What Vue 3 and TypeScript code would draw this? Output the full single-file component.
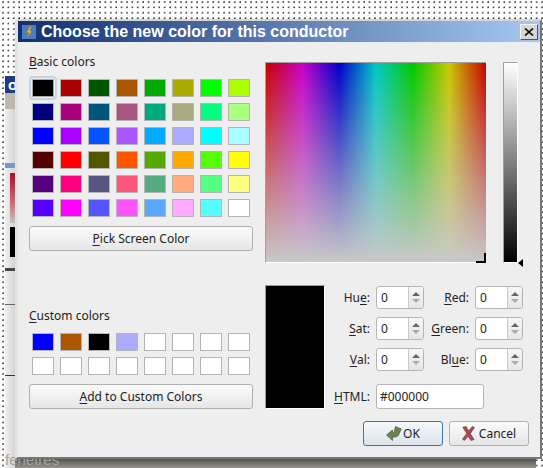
<script setup lang="ts">
const basic: string[] = [
  '#000000','#aa0000','#005500','#aa5500','#00aa00','#aaaa00','#00ff00','#aaff00',
  '#00007f','#aa007f','#00557f','#aa557f','#00aa7f','#aaaa7f','#00ff7f','#aaff7f',
  '#0000ff','#aa00ff','#0055ff','#aa55ff','#00aaff','#aaaaff','#00ffff','#aaffff',
  '#550000','#ff0000','#555500','#ff5500','#55aa00','#ffaa00','#55ff00','#ffff00',
  '#55007f','#ff007f','#55557f','#ff557f','#55aa7f','#ffaa7f','#55ff7f','#ffff7f',
  '#5500ff','#ff00ff','#5555ff','#ff55ff','#55aaff','#ffaaff','#55ffff','#ffffff',
]
const custom: string[] = [
  '#0000ff','#aa5500','#000000','#aaaaff','#ffffff','#ffffff','#ffffff','#ffffff',
  '#ffffff','#ffffff','#ffffff','#ffffff','#ffffff','#ffffff','#ffffff','#ffffff',
]
const fields = [
  { pre: 'Hu', key: 'e', post: ':' },
  { pre: '', key: 'R', post: 'ed:' },
  { pre: '', key: 'S', post: 'at:' },
  { pre: '', key: 'G', post: 'reen:' },
  { pre: '', key: 'V', post: 'al:' },
  { pre: 'Bl', key: 'u', post: 'e:' },
]
</script>

<template>
  <div class="desk">
    <div class="behind">
      <div class="b-title">o</div>
      <div class="b-tan"></div>
      <div class="b-blue"></div>
      <div class="b-red"></div>
      <div class="b-black"></div>
      <div class="b-line b-l1"></div>
      <div class="b-line b-l2"></div>
      <div class="b-line b-l3"></div>
    </div>
    <div class="under"></div>
    <div class="under-text">fenêtres</div>

    <div class="dialog">
      <header class="title">
        <svg class="app-icon" viewBox="0 0 14 14" width="14" height="14">
          <rect x="0" y="0" width="14" height="14" fill="#4a7cc0" />
          <path d="M8 1.5 L4.5 7.5 H7 L5.5 12.5 L10 6 H7.5 L9.5 1.5 Z" fill="#f0c020" stroke="#a87808" stroke-width=".5" />
        </svg>
        <span class="title-text">Choose the new color for this conductor</span>
        <button class="close" type="button">
          <svg viewBox="0 0 10 8" width="10" height="8">
            <path d="M1 0.5 L9 7.5 M9 0.5 L1 7.5" stroke="#000" stroke-width="1.6" fill="none" />
          </svg>
        </button>
      </header>

      <main class="body">
        <div class="top">
          <section class="left">
            <div class="label"><u>B</u>asic colors</div>
            <div class="swatches">
              <div
                v-for="(c, i) in basic"
                :key="i"
                class="swatch"
                :class="{ selected: i === 0 }"
                :style="{ background: c }"
              ></div>
            </div>
            <button class="btn wide" type="button"><u>P</u>ick Screen Color</button>
            <div class="label custom-label"><u>C</u>ustom colors</div>
            <div class="swatches">
              <div v-for="(c, i) in custom" :key="i" class="swatch" :style="{ background: c }"></div>
            </div>
            <button class="btn wide" type="button"><u>A</u>dd to Custom Colors</button>
          </section>

          <section class="right">
            <div class="pick-row">
              <div class="spectrum"><span class="cross"></span></div>
              <div class="lum"><span class="lum-arrow"></span></div>
            </div>
            <div class="ctl-row">
              <div class="preview"></div>
              <div class="form">
                <template v-for="f in fields" :key="f.pre + f.key">
                  <label class="f-label">{{ f.pre }}<u>{{ f.key }}</u>{{ f.post }}</label>
                  <div class="spin">
                    <span class="spin-val">0</span>
                    <span class="spin-btns">
                      <i class="up"></i>
                      <i class="down"></i>
                    </span>
                  </div>
                </template>
                <label class="f-label html-label"><u>H</u>TML:</label>
                <div class="html-input">#000000</div>
              </div>
            </div>
          </section>
        </div>

        <footer class="actions">
          <button class="btn action default" type="button">
            <svg viewBox="0 0 16 15" width="16" height="15">
              <path d="M9.5 0.5 L15.3 3 L12.6 9 Q11.6 11 9 11 H6.5 V14.5 L0.5 9 L6.5 4 V6.6 H8 Z" fill="#6d8057" stroke="#4d5c3c" stroke-width=".7" />
            </svg>
            <span>OK</span>
          </button>
          <button class="btn action cancel" type="button">
            <svg viewBox="0 0 13 15" width="13" height="15">
              <path d="M0.8 1.2 L4.2 0.6 L6.6 5 L10.4 0.5 L12.4 1.6 L8.3 7.7 L12.2 13.6 L9 14.6 L6.1 10.2 L2.5 14.4 L0.5 13.2 L4.7 7.5 Z" fill="#a84a52" stroke="#743038" stroke-width=".6" />
            </svg>
            <span>Cancel</span>
          </button>
        </footer>
      </main>
    </div>
  </div>
</template>

<style scoped>
.desk {
  position: relative;
  width: 543px;
  height: 468px;
  overflow: hidden;
  background-color: #fff;
  background-image: radial-gradient(circle at 1px 1px, #333 0.6px, transparent 0.9px);
  background-size: 5.4px 5.4px;
  background-position: 2px 1px;
  font-family: "Noto Sans", "Open Sans", sans-serif;
  font-size: 12px;
  color: #222;
}
.behind {
  position: absolute;
  left: 5px;
  top: 76px;
  width: 14px;
  height: 392px;
  background: linear-gradient(to right, #f0f0f0, #c8c8c8);
}
.behind > div { position: absolute; }
.b-title { left: 0; top: 0; width: 14px; height: 17px; background: #1d3d80; color: #fff; font: bold 15px/17px "Liberation Sans", sans-serif; padding-left: 3px; box-sizing: border-box; }
.b-tan { left: 0; top: 17px; width: 14px; height: 16px; background: #bcb8ad; }
.b-blue { left: 0; top: 87px; width: 14px; height: 5px; background: #7d97c4; }
.b-red { left: 5px; top: 97px; width: 9px; height: 50px; background: linear-gradient(to bottom, #a81028, #c87880 65%, #c4c4c4); }
.b-black { left: 5px; top: 151px; width: 9px; height: 30px; background: #000; }
.b-line { left: 0; width: 14px; background: #666; }
.b-l1 { top: 192px; height: 3px; background: #444; }
.b-l2 { top: 228px; height: 1px; }
.b-l3 { top: 299px; height: 1px; background: #333; }
.under {
  position: absolute;
  left: 15px;
  bottom: 0;
  width: 521px;
  height: 10px;
  background: linear-gradient(to bottom, #4e4e48, #96948c);
}
.under-text {
  position: absolute;
  left: 5px;
  top: 451px;
  height: 17px;
  color: #a4a4a0;
  font: 15px/17px "Liberation Sans", sans-serif;
  white-space: nowrap;
}
.dialog {
  position: absolute;
  left: 15px;
  top: 19px;
  width: 527px;
  height: 440px;
  box-sizing: border-box;
  display: flex;
  flex-direction: column;
  background: #eeeeee;
  border-style: solid;
  border-width: 2px 2px 2px 3px;
  border-color: #d8d6d0 #777 #777 #e4e2de;
}
.title {
  height: 21px;
  display: flex;
  align-items: center;
  padding: 0 2px 0 4px;
  background: linear-gradient(to right, #12306e, #a6c8f0);
  color: #fff;
}
.app-icon { flex: none; }
.title-text {
  margin-left: 5px;
  font: bold 16px "Liberation Sans", sans-serif;
  white-space: nowrap;
}
.close {
  margin-left: auto;
  width: 18px;
  height: 16px;
  padding: 0;
  display: flex;
  align-items: center;
  justify-content: center;
  background: #d8d6d0;
  border: 1px solid;
  border-color: #f4f4f0 #555 #555 #f4f4f0;
}
.body {
  flex: 1;
  display: flex;
  flex-direction: column;
  padding: 13px 0 0 11px;
  min-height: 0;
}
.top { display: flex; }
.left { width: 224px; display: flex; flex-direction: column; }
.label { height: 14px; line-height: 14px; color: #222; }
.custom-label { margin-top: 58px; }
u { text-underline-offset: 2px; }
.swatches {
  display: grid;
  grid-template-columns: repeat(8, 22px);
  grid-auto-rows: 18px;
  gap: 6px;
  margin: 10px 0 9px 3px;
}
.swatch {
  box-sizing: border-box;
  border: 1px solid #b4b4b4;
}
.selected {
  outline: 2px solid #c4d4e2;
  outline-offset: 1px;
  border-color: #a8a8a8;
  border-radius: 1px;
}
.btn {
  box-sizing: border-box;
  height: 25px;
  padding: 0;
  font: inherit;
  color: #222;
  border: 1px solid #b0b0b0;
  border-radius: 3px;
  background: linear-gradient(to bottom, #fbfbfb, #e6e6e6);
}
.wide { width: 224px; }
.right { margin-left: 12px; margin-top: 7px; display: flex; flex-direction: column; }
.pick-row { display: flex; }
.spectrum {
  position: relative;
  box-sizing: border-box;
  width: 221px;
  height: 201px;
  border-top: 1px solid #a0a0a0;
  border-left: 1px solid #a0a0a0;
  border-bottom: 1px solid #fff;
  background:
    linear-gradient(to bottom, rgba(200, 200, 200, 0), rgb(200, 200, 200)),
    linear-gradient(to right, #c80000, #c800c8 16.67%, #0000c8 33.33%, #00c8c8 50%, #00c800 66.67%, #c8c800 83.33%, #c80000);
}
.cross {
  position: absolute;
  right: 0;
  bottom: -1px;
  width: 10px;
  height: 10px;
  box-sizing: border-box;
  border-right: 2px solid #000;
  border-bottom: 2px solid #000;
}
.lum {
  position: relative;
  box-sizing: border-box;
  margin-left: 17px;
  width: 15px;
  height: 201px;
  border: 1px solid;
  border-color: #a0a0a0 #fff #fff #a0a0a0;
  background: linear-gradient(to bottom, #fff, #000);
}
.lum-arrow {
  position: absolute;
  left: 14px;
  bottom: -5px;
  width: 0;
  height: 0;
  border-style: solid;
  border-width: 4px 5px 4px 0;
  border-color: transparent #000 transparent transparent;
}
.ctl-row { display: flex; margin-top: 22px; }
.preview {
  box-sizing: border-box;
  width: 60px;
  height: 124px;
  background: #000;
  border: 1px solid;
  border-color: #999 #fff #fff #999;
}
.form {
  display: grid;
  grid-template-columns: 51px 48px 51px 48px;
  grid-template-rows: 23px 23px 23px 30px;
  row-gap: 8px;
  margin-top: 1px;
}
.f-label {
  display: flex;
  align-items: center;
  justify-content: flex-end;
  padding-right: 6px;
  white-space: pre;
  color: #222;
}
.html-label { margin-top: 5px; }
.spin {
  box-sizing: border-box;
  display: flex;
  border: 1px solid #b4b4b4;
  border-radius: 3px;
  background: #fff;
  overflow: hidden;
}
.spin-val { flex: 1; padding-left: 4px; line-height: 21px; }
.spin-btns {
  width: 14px;
  border-left: 1px solid #c8c8c8;
  background: linear-gradient(to bottom, #f6f6f6, #e6e6e6);
  display: flex;
  flex-direction: column;
  align-items: center;
  justify-content: center;
  gap: 3px;
}
.up, .down {
  width: 0;
  height: 0;
  border-left: 4px solid transparent;
  border-right: 4px solid transparent;
}
.up { border-bottom: 4px solid #666; }
.down { border-top: 4px solid #aaa; }
.html-input {
  grid-column: 2 / span 3;
  box-sizing: border-box;
  margin-top: 5px;
  width: 108px;
  height: 25px;
  border: 1px solid #b4b4b4;
  border-radius: 3px;
  background: #fff;
  padding-left: 3px;
  line-height: 23px;
}
.actions {
  display: flex;
  justify-content: flex-end;
  gap: 6px;
  margin-top: 12px;
  padding-right: 11px;
}
.action {
  width: 80px;
  display: flex;
  align-items: center;
  justify-content: center;
  gap: 1px;
}
.cancel { gap: 4px; }
.default {
  border-color: #3a78a8;
  background: linear-gradient(to bottom, #f6f8fa, #dce4ea);
}
</style>
